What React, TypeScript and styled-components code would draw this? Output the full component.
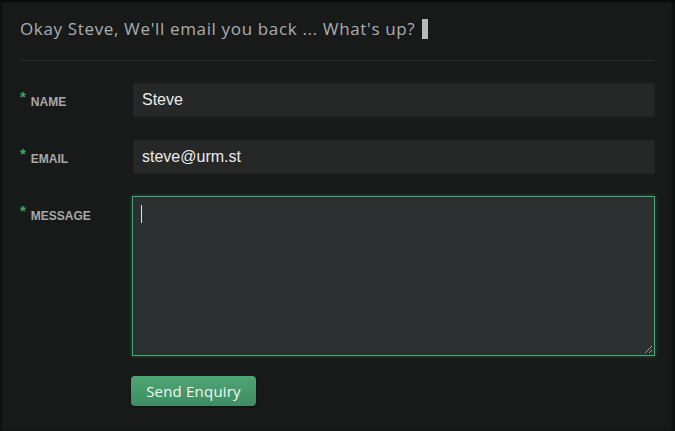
import React from "react";
import styled, { createGlobalStyle } from "styled-components";

const Global = createGlobalStyle`
  html, body { margin: 0; padding: 0; background: #181a1a; }
  body { width: 675px; height: 431px; overflow: hidden; }
`;

const Panel = styled.div`
  width: 675px;
  height: 431px;
  box-sizing: border-box;
  background: #181a1a;
  box-shadow: inset 0 2px 2px rgba(0,0,0,0.5), inset 2px 0 2px rgba(0,0,0,0.3), inset -3px 0 2px rgba(0,0,0,0.4);
  padding: 17px 20px 0 20px;
`;

const Heading = styled.h2`
  margin: 0;
  font-family: "Open Sans", "Noto Sans", sans-serif;
  font-weight: 400;
  font-size: 17px;
  letter-spacing: 0.65px;
  line-height: 24px;
  color: #a9adb0;
  display: flex;
  align-items: center;
  padding-bottom: 19px;
  border-bottom: 1px solid #2b2c2c;
`;

const BlockCursor = styled.span`
  display: inline-block;
  width: 6px;
  height: 20px;
  background: #b9b9b9;
  margin-left: 7px;
`;

const Form = styled.form`
  display: flex;
  flex-direction: column;
  gap: 22px;
  padding-top: 22px;
`;

const Row = styled.div<{ $offset?: number }>`
  display: grid;
  grid-template-columns: 112px 1fr;
  align-items: start;
  margin-top: ${(p) => p.$offset ?? 0}px;
`;

const Label = styled.label<{ $top: number }>`
  font-family: "Liberation Sans", Arial, sans-serif;
  font-weight: 700;
  font-size: 12px;
  color: #a8a8a8;
  text-transform: uppercase;
  display: flex;
  align-items: flex-start;
  padding-top: ${(p) => p.$top}px;
`;

const Star = styled.span`
  color: #3ea46a;
  font-size: 15px;
  line-height: 10px;
  margin-right: 5px;
  margin-top: -4px;
`;

const LabelText = styled.span`
  line-height: 12px;
`;

const Input = styled.input`
  box-sizing: border-box;
  width: 522px;
  height: 34px;
  margin-left: 1px;
  background: #262727;
  border: 1px solid #222323;
  color: #ececec;
  font-family: "Liberation Sans", Arial, sans-serif;
  font-size: 16px;
  padding: 0 8px;
  outline: none;
`;

const TextArea = styled.div`
  position: relative;
  box-sizing: border-box;
  width: 523px;
  height: 160px;
  background: #2d3031;
  border: 1px solid #45a672;
  box-shadow: 0 0 4px rgba(69,166,114,0.45);
  padding: 8px 8px;
`;

const Caret = styled.span`
  display: block;
  width: 1px;
  height: 18px;
  background: #e0e0e0;
`;

const Grip = styled.svg`
  position: absolute;
  right: 1px;
  bottom: 1px;
`;

const ButtonRow = styled.div`
  padding-left: 111px;
  margin-top: -2px;
`;

const Button = styled.button`
  width: 125px;
  height: 30px;
  border: none;
  border-radius: 4px;
  background: linear-gradient(#4ea575, #3f8d62);
  box-shadow: 0 1px 2px rgba(0,0,0,0.5);
  color: #f2f7f4;
  font-family: "Open Sans", "Noto Sans", sans-serif;
  font-size: 15px;
  letter-spacing: 0.2px;
  padding: 0;
  cursor: pointer;
`;

export default function App() {
  return (
    <>
      <Global />
      <Panel>
        <Heading>
          Okay Steve, We'll email you back ... What's up?
          <BlockCursor />
        </Heading>
        <Form onSubmit={(e) => e.preventDefault()}>
          <Row>
            <Label $top={13}>
              <Star>*</Star>
              <LabelText>Name</LabelText>
            </Label>
            <Input defaultValue="Steve" />
          </Row>
          <Row $offset={1}>
            <Label $top={13}>
              <Star>*</Star>
              <LabelText>Email</LabelText>
            </Label>
            <Input defaultValue="steve@urm.st" />
          </Row>
          <Row>
            <Label $top={14}>
              <Star>*</Star>
              <LabelText>Message</LabelText>
            </Label>
            <TextArea>
              <Caret />
              <Grip width="9" height="9" viewBox="0 0 9 9">
                <path d="M1 8 L8 1 M5 8 L8 5" stroke="#9a9a9a" strokeWidth="1" />
              </Grip>
            </TextArea>
          </Row>
          <ButtonRow>
            <Button type="button">Send Enquiry</Button>
          </ButtonRow>
        </Form>
      </Panel>
    </>
  );
}
